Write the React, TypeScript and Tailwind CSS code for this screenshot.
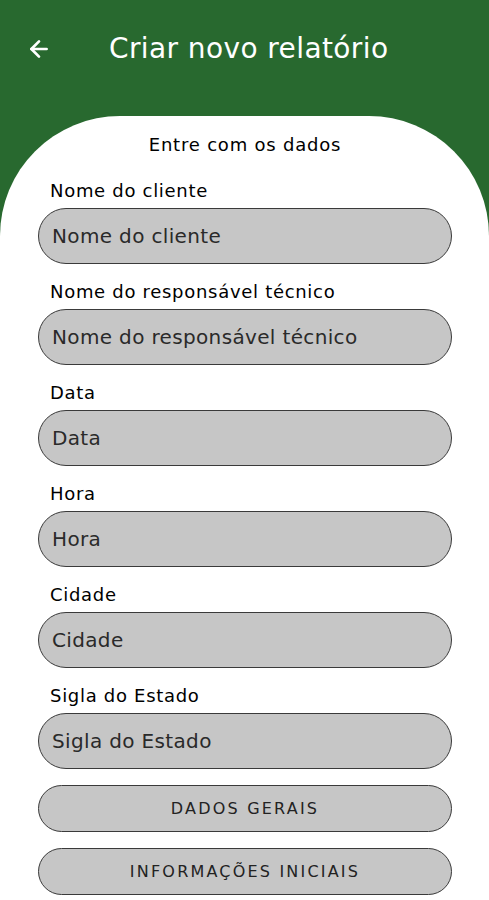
import React from 'react';
import { ArrowLeft } from 'lucide-react';

const fields = [
  'Nome do cliente',
  'Nome do responsável técnico',
  'Data',
  'Hora',
  'Cidade',
  'Sigla do Estado',
];

const Field = ({ label }: { label: string }) => {
  return (
    <div className="flex flex-col">
      <span className="text-[18px] leading-[22px] tracking-[0.7px] text-black pl-3">{label}</span>
      <input
        placeholder={label}
        className="mt-[6px] h-[56px] w-full rounded-[28px] border border-[#3a3a3a] bg-[#c6c6c6] px-[13px] text-[20px] tracking-[0.35px] text-[#222] placeholder:text-[#2a2a2a] outline-none"
      />
    </div>
  );
};

const App = () => {
  return (
    <div
      className="min-h-[900px] bg-[#28692f] overflow-hidden"
      style={{ fontFamily: '"DejaVu Sans", Lato, sans-serif' }}
    >
      <header className="h-[116px] flex items-start pt-[32px] text-white">
        <ArrowLeft className="ml-[26px] h-[26px] w-[26px] mt-[4px]" strokeWidth={2.5} />
        <h1 className="ml-[57px] text-[28px] leading-[34px] tracking-[0.4px]">Criar novo relatório</h1>
      </header>
      <main className="bg-white rounded-t-[120px] min-h-[784px] px-[38px] pt-[18px] pr-[37px]">
        <p className="text-center text-[18px] leading-[22px] tracking-[0.8px] text-black">Entre com os dados</p>
        <div className="mt-[24px] flex flex-col gap-[17px]">
          {fields.map((f) => (
            <Field key={f} label={f} />
          ))}
        </div>
        <div className="mt-[16px] flex flex-col gap-[16px]">
          <button className="h-[47px] rounded-[24px] border border-[#3a3a3a] bg-[#c6c6c6] text-[16px] tracking-[2.2px] text-[#222]">
            DADOS GERAIS
          </button>
          <button className="h-[47px] rounded-[24px] border border-[#3a3a3a] bg-[#c6c6c6] text-[16px] tracking-[2.2px] text-[#222]">
            INFORMAÇÕES INICIAIS
          </button>
        </div>
      </main>
    </div>
  );
};

export default App;
